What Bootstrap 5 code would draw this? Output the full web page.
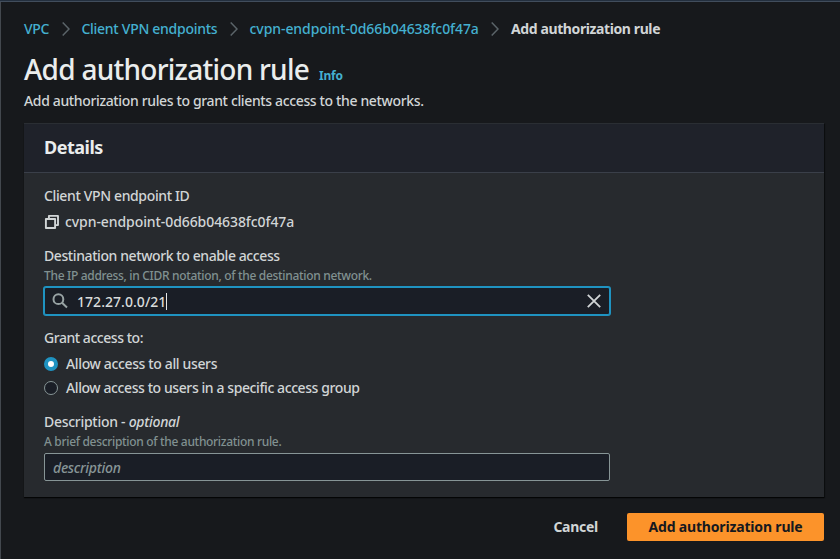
<!DOCTYPE html>
<html lang="en" data-bs-theme="dark">
<head>
<meta charset="utf-8">
<meta name="viewport" content="width=device-width, initial-scale=1">
<title>Add authorization rule</title>
<link href="https://cdn.jsdelivr.net/npm/bootstrap@5.3.0/dist/css/bootstrap.min.css" rel="stylesheet">
<style>
body{background:#17191c;color:#d1d5d6;font:500 14px/22px "Noto Sans","Open Sans",sans-serif;letter-spacing:-.36px;height:559px;overflow:hidden}
.page-shell{height:559px;border-left:1px solid #43484e;padding:0 16px 0 23px}
.top-edge{height:2px;background:#414d5c;border-top:1px solid #232f3e;margin:0 -16px 0 -24px}
.crumbs{padding-top:16px}
.crumbs a{color:#44b0d0;text-decoration:none}
.crumbs .crumb-gap{width:8px;height:14px;margin:0 12px 0 12.3px;flex:none;fill:none;stroke:#5b6469;stroke-width:1.5}
.crumb-now{font-weight:700;letter-spacing:-.4px}
.page-title{font-size:28px;font-weight:500;line-height:36px;letter-spacing:-.74px;color:#eaeded;margin:-1px 0 0}
.info-link{font-size:12px;font-weight:700;letter-spacing:-.25px;color:#44b0d0;text-decoration:none;margin-left:10px}
.intro{margin:3px 0 0}
.panel{margin-top:11px;background:#272a2e;border:0;border-top:1px solid #2a2e33;border-radius:0;box-shadow:0 1px 1px #000a,1px 1px 1px #0006;color:inherit}
.panel-head{height:49px;padding:0 20px 2px;background:#1f222a;border-bottom:1px solid #3a3f49;border-radius:0!important}
.panel-head h2{font-size:18px;font-weight:700;letter-spacing:-.5px;line-height:22px;margin:0;color:#eaeded}
.panel-body{padding:12px 20px 16px}
.form-row{margin-top:12px}
.near{margin-top:4px}
.ls-08{letter-spacing:-.08px}
.ls-28{letter-spacing:-.28px}
.ls-41{letter-spacing:-.41px}
.ls-46{letter-spacing:-.46px}
.copy-icon{margin-right:5px}
.search-icon{margin:0 9px 0 -1px}
.hint{font-size:12px;line-height:16px;letter-spacing:-.32px;color:#819191;padding-top:1px;height:16px}
.field{width:566px;height:28px;background:#1a1e26;border:1px solid #879596;border-radius:2px;padding:0 8px;display:flex;align-items:center}
.field-focus{border-color:#1f93c1;box-shadow:0 0 0 1px #1f93c1}
.field-value{letter-spacing:.04px;color:#d9dcdc;padding-top:2px}
.field input{flex:1;min-width:0;background:none;border:0;outline:0;padding:2px 0 0;color:#d9dcdc;letter-spacing:-.28px;font:inherit}
.field input::placeholder{color:#879596;opacity:1;font-style:italic}
.caret-line{width:1px;height:17px;background:#e6e8e8}
.choice{padding:0;margin:2px 0 0;min-height:0;gap:8px}
.choice:not(.choice + .choice){margin-top:4px}
.choice .form-check-input{float:none;margin:0;width:14px;height:14px;background-color:#1a1e26;border:1px solid #879596;box-shadow:none}
.choice .form-check-input:checked{background:#fff;border:4px solid #1f93c1}
.btn-plain,.btn-go{height:28px;border:0;border-radius:2px;font-size:14px;font-weight:700;line-height:28px;padding:0}
.btn-plain{color:#d1d5d6;letter-spacing:-.27px;margin-right:29px}
.btn-go,.btn-go:hover{background:#fc932a;color:#16191f;width:197px;letter-spacing:-.17px}
</style>
</head>
<body>
<div class="page-shell">
  <div class="top-edge"></div>
  <nav class="crumbs d-flex align-items-center" aria-label="breadcrumb">
    <a href="#" class="ls-28">VPC</a>
    <svg class="crumb-gap" viewBox="0 0 8 14"><path d="M.7.5 7 7 .7 13.5"/></svg>
    <a href="#" class="ls-28">Client VPN endpoints</a>
    <svg class="crumb-gap" viewBox="0 0 8 14"><path d="M.7.5 7 7 .7 13.5"/></svg>
    <a href="#" class="ls-08">cvpn-endpoint-0d66b04638fc0f47a</a>
    <svg class="crumb-gap" viewBox="0 0 8 14"><path d="M.7.5 7 7 .7 13.5"/></svg>
    <span class="crumb-now">Add authorization rule</span>
  </nav>
  <header class="pt-2 mt-1">
    <div class="d-flex align-items-baseline">
      <h1 class="page-title">Add authorization rule</h1>
      <a href="#" class="info-link">Info</a>
    </div>
    <p class="intro">Add authorization rules to grant clients access to the networks.</p>
  </header>
  <main class="panel card">
    <div class="panel-head card-header d-flex align-items-center"><h2>Details</h2></div>
    <div class="panel-body card-body">
      <div>Client VPN endpoint ID</div>
      <div class="near ls-08 d-flex align-items-center">
        <svg class="copy-icon" width="16" height="16" viewBox="0 0 16 16" fill="none" stroke="#d1d5d6" stroke-width="1.9" stroke-linejoin="round"><path d="M1.9 5h9.200v9H1.900zM4.900 4.500V1.900H14v9.200h-2.600"/></svg>
        <span>cvpn-endpoint-0d66b04638fc0f47a</span>
      </div>
      <div class="form-row ls-41">Destination network to enable access</div>
      <div class="hint">The IP address, in CIDR notation, of the destination network.</div>
      <div class="field field-focus near">
        <svg class="search-icon" width="16" height="16" viewBox="0 0 16 16" fill="none" stroke="#98a3a4" stroke-width="2"><circle cx="6.4" cy="6.2" r="4.9"/><path d="m10 9.800 5 4.700"/></svg>
        <span class="field-value">172.27.0.0/21</span><span class="caret-line"></span>
        <svg class="ms-auto" width="14" height="14" viewBox="0 0 14 14" fill="none" stroke="#d1d5d6" stroke-width="1.8"><path d="m.8.8 12.400 12.400M13.200.8.8 13.200"/></svg>
      </div>
      <div class="form-row ls-46">Grant access to:</div>
      <div class="form-check choice d-flex align-items-center">
        <input class="form-check-input" type="radio" name="grant" id="grantAll" checked>
        <label for="grantAll">Allow access to all users</label>
      </div>
      <div class="form-check choice ls-41 d-flex align-items-center">
        <input class="form-check-input" type="radio" name="grant" id="grantGroup">
        <label for="grantGroup">Allow access to users in a specific access group</label>
      </div>
      <div class="form-row ls-28">Description - <i>optional</i></div>
      <div class="hint ls-28">A brief description of the authorization rule.</div>
      <div class="field near">
        <input type="text" placeholder="description" aria-label="Description">
      </div>
    </div>
  </main>
  <footer class="d-flex justify-content-end mt-3">
    <button type="button" class="btn btn-plain">Cancel</button>
    <button type="button" class="btn btn-go">Add authorization rule</button>
  </footer>
</div>
<script src="https://cdn.jsdelivr.net/npm/bootstrap@5.3.0/dist/js/bootstrap.bundle.min.js"></script>
</body>
</html>
